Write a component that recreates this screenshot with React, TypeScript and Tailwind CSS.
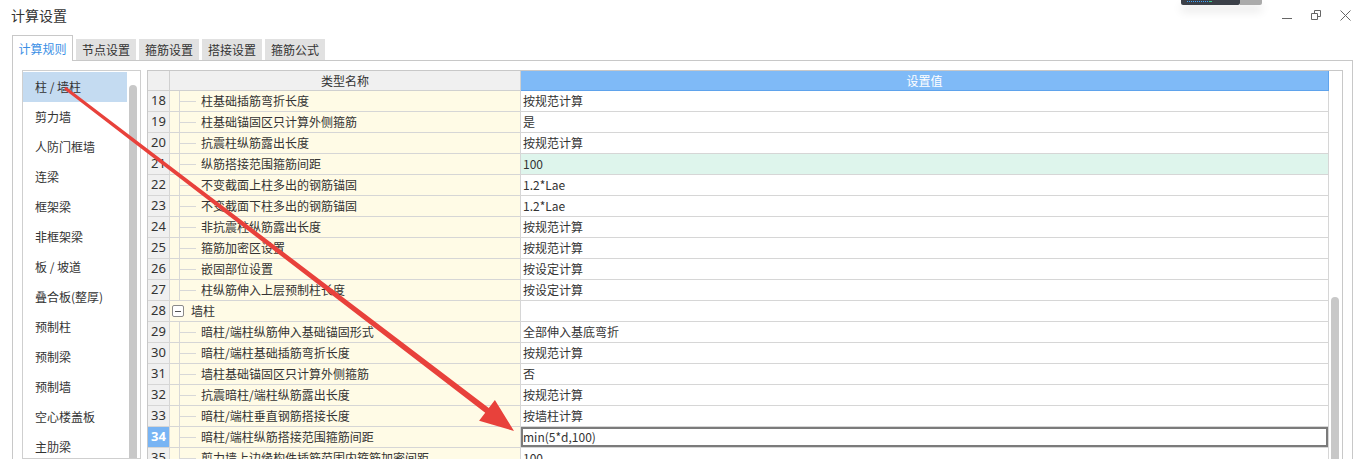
import React from "react";

type Row = { no: number; name: string; value: string; group?: boolean };

const menu = [
  "柱 / 墙柱",
  "剪力墙",
  "人防门框墙",
  "连梁",
  "框架梁",
  "非框架梁",
  "板 / 坡道",
  "叠合板(整厚)",
  "预制柱",
  "预制梁",
  "预制墙",
  "空心楼盖板",
  "主肋梁",
];

const rows: Row[] = [
  { no: 18, name: "柱基础插筋弯折长度", value: "按规范计算" },
  { no: 19, name: "柱基础锚固区只计算外侧箍筋", value: "是" },
  { no: 20, name: "抗震柱纵筋露出长度", value: "按规范计算" },
  { no: 21, name: "纵筋搭接范围箍筋间距", value: "100" },
  { no: 22, name: "不变截面上柱多出的钢筋锚固", value: "1.2*Lae" },
  { no: 23, name: "不变截面下柱多出的钢筋锚固", value: "1.2*Lae" },
  { no: 24, name: "非抗震柱纵筋露出长度", value: "按规范计算" },
  { no: 25, name: "箍筋加密区设置", value: "按规范计算" },
  { no: 26, name: "嵌固部位设置", value: "按设定计算" },
  { no: 27, name: "柱纵筋伸入上层预制柱长度", value: "按设定计算" },
  { no: 28, name: "墙柱", value: "", group: true },
  { no: 29, name: "暗柱/端柱纵筋伸入基础锚固形式", value: "全部伸入基底弯折" },
  { no: 30, name: "暗柱/端柱基础插筋弯折长度", value: "按规范计算" },
  { no: 31, name: "墙柱基础锚固区只计算外侧箍筋", value: "否" },
  { no: 32, name: "抗震暗柱/端柱纵筋露出长度", value: "按规范计算" },
  { no: 33, name: "暗柱/端柱垂直钢筋搭接长度", value: "按墙柱计算" },
  { no: 34, name: "暗柱/端柱纵筋搭接范围箍筋间距", value: "min(5*d,100)" },
  { no: 35, name: "剪力墙上边缘构件插筋范围内箍筋加密间距", value: "100" },
];

const tabs = ["计算规则", "节点设置", "箍筋设置", "搭接设置", "箍筋公式"];

export default function App() {
  return (
    <div className="relative w-[1357px] h-[459px] overflow-hidden bg-white text-[#333] font-['Noto_Sans_CJK_SC',sans-serif]">
      {/* Title bar */}
      <div className="flex h-[30px] items-center justify-between pl-[11px] pr-[6px]">
        <span className="text-[14px] leading-none">计算设置</span>
        <div className="flex items-center gap-[18px]">
          <svg width="11" height="11" viewBox="0 0 11 11">
            <path d="M0 8.5h10" stroke="#666" strokeWidth="1" />
          </svg>
          <svg width="11" height="11" viewBox="0 0 11 11">
            <path d="M0.5 3.5h6v6h-6z M3.5 3.5v-3h6v6h-3" stroke="#666" strokeWidth="1" fill="none" />
          </svg>
          <svg width="11" height="11" viewBox="0 0 11 11">
            <path d="M0.5 0.5l10 10M10.5 0.5l-10 10" stroke="#666" strokeWidth="1" />
          </svg>
        </div>
      </div>

      {/* floating widget peeking at top */}
      <div className="absolute left-[1181px] top-0 flex h-[5px] shadow-[0_6px_10px_rgba(0,0,0,0.12)]">
        <div className="flex h-full w-[59px] items-start rounded-b-[2px] bg-[#3b4048] pl-[6px]">
          <div className="mt-[1px] h-[1px] w-[22px] bg-[repeating-linear-gradient(90deg,#3ea6ff_0_1px,transparent_1px_2px)]" />
          <div className="mt-[1px] h-[1px] w-[3px] bg-[#3ecf8e]" />
        </div>
        <div className="h-full w-[22px] rounded-br-[2px] bg-[#ababab]" />
      </div>

      {/* Tabs */}
      <div className="flex h-[30px] items-end gap-[3px] pl-[12px]">
        {tabs.map((t, i) =>
          i === 0 ? (
            <div
              key={t}
              className="relative z-10 -mb-px flex h-[26px] w-[61px] items-center justify-center border-x border-t border-[#c8c8c8] bg-white text-[12px] text-[#3b8fe5]"
            >
              {t}
            </div>
          ) : (
            <div
              key={t}
              className="flex h-[21px] w-[60px] items-center justify-center bg-[#e1e1e1] text-[12px] text-[#333]"
            >
              {t}
            </div>
          )
        )}
      </div>

      {/* Panel */}
      <div className="ml-[12px] flex h-[399px] w-[1341px] gap-[6px] border-x border-t border-[#c8c8c8] pl-[9px] pt-[9px]">
        {/* left menu */}
        <div className="flex w-[119px] shrink-0 border border-[#cfcfcf]">
          <div className="flex w-[104px] flex-col pt-[1px]">
            {menu.map((m, i) => (
              <div
                key={m}
                className={`flex h-[30px] shrink-0 items-center pl-[12px] text-[12px] ${
                  i === 0 ? "bg-[#c4dbf1]" : ""
                }`}
              >
                {m}
              </div>
            ))}
          </div>
          <div className="ml-[2px] mt-[14px] w-[8px] rounded-t-full bg-[#c8c8c8]" />
        </div>

        {/* grid */}
        <div className="flex w-[1196px] shrink-0 border-x border-t border-[#c8c8c8]">
          <div className="flex w-[1181px] shrink-0 flex-col">
            {/* header */}
            <div className="flex h-[20px] shrink-0 text-[12px]">
              <div className="w-[22px] border-r border-b border-[#d0d0d0] bg-[#f0f0f0]" />
              <div className="flex w-[351px] items-center justify-center border-r border-b border-[#d0d0d0] bg-[#f0f0f0]">
                类型名称
              </div>
              <div className="flex w-[808px] items-center justify-center border-r border-b border-[#5fa3ec] bg-[#7fbaf7] text-white">
                设置值
              </div>
            </div>

            {rows.map((r) => {
              const sel = r.no === 34;
              return (
                <div key={r.no} className="flex h-[21px] shrink-0 text-[12px]">
                  <div
                    className={`flex w-[22px] items-center justify-center border-r border-b border-[#d6d6d6] font-['Noto_Sans',sans-serif] text-[13px] ${
                      sel ? "bg-[#78b4f4] font-bold text-white" : "bg-[#f0f0f0]"
                    }`}
                  >
                    {r.no}
                  </div>
                  <div className="flex w-[351px] items-stretch overflow-hidden whitespace-nowrap border-r border-b border-[#d6d6d6] bg-[#fffbe6]">
                    {r.group ? (
                      <div className="flex items-center">
                        <div className="ml-[2px] flex h-[12px] w-[12px] items-center justify-center rounded-[2px] border border-[#8a8a8a] bg-white">
                          <div className="h-px w-[6px] bg-[#555]" />
                        </div>
                        <span className="ml-[7px]">{r.name}</span>
                      </div>
                    ) : (
                      <div className="flex items-stretch">
                        <div className="ml-[9px] w-px bg-[#d8d8d8]" />
                        <div className="flex items-center">
                          <div className="h-px w-[16px] bg-[#d8d8d8]" />
                        </div>
                        <span className="ml-[5px] flex items-center">{r.name}</span>
                      </div>
                    )}
                  </div>
                  <div
                    className={`flex w-[808px] items-center border-r border-b border-[#d6d6d6] pl-[2px] ${
                      r.no === 21 ? "bg-[#def5ec]" : "bg-white"
                    } ${sel ? "shadow-[inset_0_0_0_2px_#7b7b7b]" : ""}`}
                  >
                    {r.value}
                  </div>
                </div>
              );
            })}
          </div>
          {/* vertical scrollbar */}
          <div className="w-[13px] shrink-0 pl-[2px]">
            <div className="mt-[226px] h-[200px] w-[8px] rounded-t-full bg-[#c8c8c8]" />
          </div>
        </div>
      </div>

      {/* annotation arrow */}
      <svg
        className="pointer-events-none absolute left-0 top-0"
        width="1357"
        height="459"
        viewBox="0 0 1357 459"
      >
        <polygon
          points="64.1,89.2 485.2,412.8 479.1,420.7 514,431 494.9,400.1 488.8,408.0 65.9,86.8"
          fill="#e8413b"
        />
      </svg>
    </div>
  );
}
